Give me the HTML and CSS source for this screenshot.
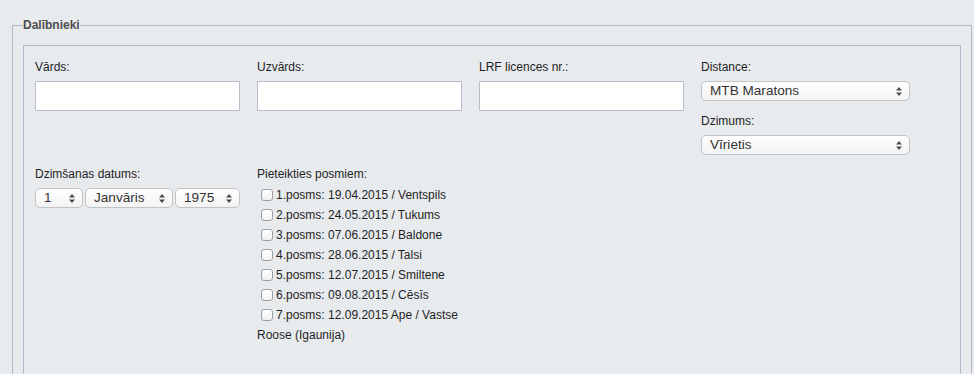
FILE: index.html
```html
<!DOCTYPE html>
<html lang="lv">
<head>
<meta charset="utf-8">
<title>Dalībnieki</title>
<link rel="stylesheet" href="styles.css">
</head>
<body>
<fieldset class="group">
  <legend class="group-title">Dalībnieki</legend>
  <div class="panel">
    <div class="grid">
      <div class="field">
        <label class="lbl" for="vards">Vārds:</label>
        <input class="txt" id="vards" type="text">
      </div>
      <div class="field">
        <label class="lbl" for="uzvards">Uzvārds:</label>
        <input class="txt" id="uzvards" type="text">
      </div>
      <div class="field">
        <label class="lbl" for="lrf">LRF licences nr.:</label>
        <input class="txt" id="lrf" type="text">
      </div>
      <div class="field">
        <label class="lbl" for="distance">Distance:</label>
        <span class="sel">
          <select id="distance"><option>MTB Maratons</option></select>
          <svg class="arr" width="6" height="9" viewBox="0 0 6 9"><path d="M3 0L6 3.5H0Z M3 9L6 5.5H0Z" fill="#4a4a4a"/></svg>
        </span>
        <label class="lbl lbl-next" for="dzimums">Dzimums:</label>
        <span class="sel">
          <select id="dzimums"><option>Vīrietis</option></select>
          <svg class="arr" width="6" height="9" viewBox="0 0 6 9"><path d="M3 0L6 3.5H0Z M3 9L6 5.5H0Z" fill="#4a4a4a"/></svg>
        </span>
      </div>

      <div class="field">
        <span class="lbl">Dzimšanas datums:</span>
        <div class="date">
          <span class="sel sel-day">
            <select><option>1</option></select>
            <svg class="arr" width="6" height="9" viewBox="0 0 6 9"><path d="M3 0L6 3.5H0Z M3 9L6 5.5H0Z" fill="#4a4a4a"/></svg>
          </span>
          <span class="sel sel-month">
            <select><option>Janvāris</option></select>
            <svg class="arr" width="6" height="9" viewBox="0 0 6 9"><path d="M3 0L6 3.5H0Z M3 9L6 5.5H0Z" fill="#4a4a4a"/></svg>
          </span>
          <span class="sel sel-year">
            <select><option>1975</option></select>
            <svg class="arr" width="6" height="9" viewBox="0 0 6 9"><path d="M3 0L6 3.5H0Z M3 9L6 5.5H0Z" fill="#4a4a4a"/></svg>
          </span>
        </div>
      </div>
      <div class="field">
        <span class="lbl">Pieteikties posmiem:</span>
        <div class="stages">
          <label class="stage"><input type="checkbox" class="cb">1.posms: 19.04.2015 / Ventspils</label>
          <label class="stage"><input type="checkbox" class="cb">2.posms: 24.05.2015 / Tukums</label>
          <label class="stage"><input type="checkbox" class="cb">3.posms: 07.06.2015 / Baldone</label>
          <label class="stage"><input type="checkbox" class="cb">4.posms: 28.06.2015 / Talsi</label>
          <label class="stage"><input type="checkbox" class="cb">5.posms: 12.07.2015 / Smiltene</label>
          <label class="stage"><input type="checkbox" class="cb">6.posms: 09.08.2015 / Cēsīs</label>
          <label class="stage"><input type="checkbox" class="cb">7.posms: 12.09.2015 Ape / Vastse Roose (Igaunija)</label>
        </div>
      </div>
    </div>
  </div>
</fieldset>
</body>
</html>
```

FILE: styles.css
```css
html, body {
  margin: 0;
  padding: 0;
}
body {
  background: #e8ebee;
  font-family: "Liberation Sans", Arial, Helvetica, sans-serif;
  font-size: 12px;
  color: #1e1e1e;
  overflow: hidden;
}
.group {
  margin: 18px 2px 0 12px;
  padding: 13px 10px 0 10px;
  border: 1px solid #b5b8ca;
  min-width: 0;
}
.group-title {
  padding: 0;
  font-size: 12px;
  line-height: 14px;
  font-weight: bold;
  color: #4e4e4e;
}
.panel {
  border: 1px solid #b5b8ca;
  padding: 14px 11px 0 11px;
  min-height: 400px;
}
.grid {
  display: grid;
  grid-template-columns: 205px 205px 205px 209px;
  column-gap: 17px;
  row-gap: 12px;
  align-items: start;
}
.field {
  display: flex;
  flex-direction: column;
  align-items: stretch;
}
.lbl {
  display: block;
  line-height: 14px;
  margin-bottom: 7px;
  color: #1e1e1e;
}
.lbl-next {
  margin-top: 13px;
}
.txt {
  box-sizing: border-box;
  height: 30px;
  width: 205px;
  margin: 0;
  border: 1px solid #b9bcc8;
  background: #fff;
  border-radius: 0;
  padding: 0 6px;
  font: inherit;
}
.sel {
  position: relative;
  display: block;
}
.sel select {
  -webkit-appearance: none;
  appearance: none;
  box-sizing: border-box;
  display: block;
  width: 100%;
  height: 20px;
  margin: 0;
  padding: 0 18px 0 8px;
  border: 1px solid #c3c3c6;
  border-radius: 5px;
  background: linear-gradient(#ffffff, #f3f3f4);
  font-family: "Liberation Sans", Arial, Helvetica, sans-serif;
  font-size: 13.6px;
  line-height: 18px;
  color: #333;
}
.sel .arr {
  position: absolute;
  right: 8px;
  top: 5.5px;
  pointer-events: none;
}
.date {
  display: flex;
  gap: 2px;
}
.sel-day { width: 48px; }
.sel-month { width: 88px; }
.sel-year { width: 65px; }
.stages {
  margin-top: -3px;
}
.stage {
  display: block;
  line-height: 20px;
  color: #1e1e1e;
}
.cb {
  -webkit-appearance: none;
  appearance: none;
  box-sizing: border-box;
  width: 12px;
  height: 12px;
  margin: 0 3px 0 4px;
  border: 1px solid #a0a0a0;
  border-radius: 3px;
  background: linear-gradient(#ffffff, #f0f0f0);
  vertical-align: -2px;
}
```
